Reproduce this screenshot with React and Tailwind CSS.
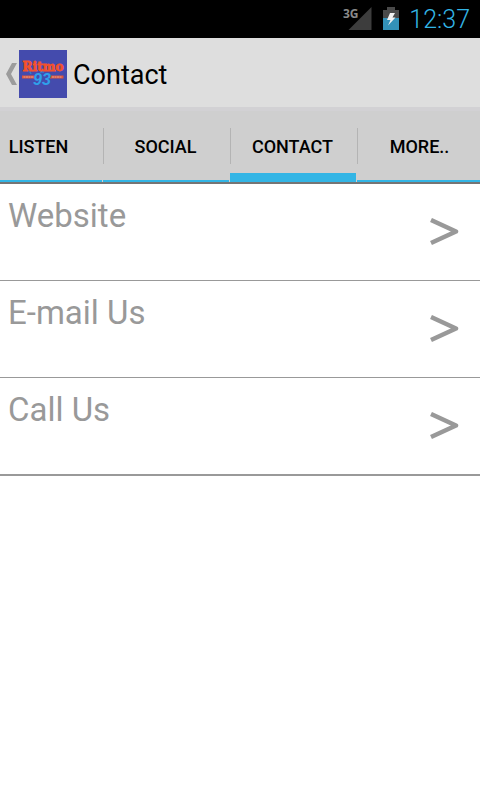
// src/App.jsx
import React, { useState } from 'react';

const tabs = ['LISTEN', 'SOCIAL', 'CONTACT', 'MORE..'];

const contactItems = [
  { title: 'Website', href: '#website' },
  { title: 'E-mail Us', href: '#email' },
  { title: 'Call Us', href: '#call' },
];

function SignalIcon() {
  return (
    <svg width="30" height="30" viewBox="0 0 30 30" aria-hidden="true">
      <path d="M28.500 3V26H5.500Z" fill="#3d3d3d" />
      <text x="0" y="14" fontFamily="'Noto Sans', sans-serif" fontSize="12" fontWeight="700" fill="#8a8a8a">3G</text>
    </svg>
  );
}

function BatteryIcon() {
  return (
    <svg width="16" height="24" viewBox="0 0 16 24" aria-hidden="true">
      <path d="M4 0H12V3H16V11H0V3H4Z" fill="#4a4a4a" />
      <path d="M0 11H16V23H0Z" fill="#3391b8" />
      <path d="M7 6L12 6L9.500 10.500H12.500L5 18.500L7.500 13H4Z" fill="#f2f2f2" />
    </svg>
  );
}

function Logo() {
  return (
    <svg width="48" height="48" viewBox="0 0 48 48" role="img" aria-label="Ritmo 93">
      <rect width="48" height="48" fill="#444bad" />
      <path d="M3 25.500H15V28.500H3ZM31 25.500H44.500V28.500H31Z" fill="#e0553a" />
      <path d="M4.500 27H14M33 27H43" stroke="#d9a59b" strokeWidth="1" strokeDasharray="2 0.500" />
      {/* Shadow marks under the name */}
      <path d="M10 20L12 24M21 22H25M34 15L32 21" stroke="#2f7fd0" strokeWidth="1.500" />
      <text x="24" y="21" textAnchor="middle" fontFamily="'DejaVu Serif', serif" fontSize="12" fontWeight="700" fill="#f4512c" stroke="#f4512c" strokeWidth="0.8">Ritmo</text>
      <text x="23" y="35" textAnchor="middle" fontFamily="'Liberation Sans', sans-serif" fontSize="16" fontStyle="italic" fontWeight="700" fill="#2fa0ea">93</text>
    </svg>
  );
}

function App() {
  const [activeTab, setActiveTab] = useState('CONTACT');

  return (
    <div className="min-h-screen bg-white font-['Roboto',sans-serif]">
      {/* Status bar */}
      <div className="flex h-[38px] items-center justify-end bg-black pr-[10px]">
        <SignalIcon />
        <span className="ml-[10px]">
          <BatteryIcon />
        </span>
        <span className="ml-[10px] pt-[2px] text-[25px] leading-[36px] font-light text-[#33b5e5]">12:37</span>
      </div>

      {/* Action bar */}
      <header className="flex h-[73px] items-center border-b-4 border-[#d2d1d4] bg-[#dedede] pt-[3px] pl-[6px]">
        <button type="button" aria-label="Back" className="flex items-center">
          <svg width="13" height="22" viewBox="0 0 13 22" aria-hidden="true">
            <path d="M6 0H11L5 11L11 22H6L0 11Z" fill="#9c9c9c" />
          </svg>
          <Logo />
        </button>
        <h1 className="ml-[6px] pt-[2px] text-[27px] leading-[36px] text-black">Contact</h1>
      </header>

      {/* Tabs */}
      <nav className="overflow-hidden border-b-2 border-[#757575] bg-[#cfcfcf]">
        <div className="-ml-6 flex">
          {tabs.map((tab) => (
            <button
              key={tab}
              type="button"
              onClick={() => setActiveTab(tab)}
              className="flex h-[71px] min-w-[127px] flex-1 flex-col justify-between pt-[17px]"
            >
              <span className="flex h-9 w-full items-center justify-center border-l border-[#b4b4b4] pr-[3px] text-[18px] font-medium text-black">
                {tab}
              </span>
              <span className={`w-full border-r border-[#cfcfcf] bg-[#33b5e5] bg-clip-padding ${activeTab === tab ? 'h-[9px]' : 'h-[2px]'}`} />
            </button>
          ))}
        </div>
      </nav>

      {/* Contact list */}
      <ul className="border-b border-[#999999]">
        {contactItems.map((item) => (
          <li key={item.title} className="border-b border-[#999999]">
            <a href={item.href} className="flex h-24 justify-between pl-2 pr-5">
              <span className="pt-3 text-[33px] leading-[40px] text-[#999999]">{item.title}</span>
              <svg width="30" height="28" viewBox="0 0 30 28" className="self-center" aria-hidden="true">
                <path d="M1 2L26 13.500L1 25" fill="none" stroke="#999999" strokeWidth="4.500" strokeLinejoin="round" />
              </svg>
            </a>
          </li>
        ))}
      </ul>
    </div>
  );
}

export default App;
